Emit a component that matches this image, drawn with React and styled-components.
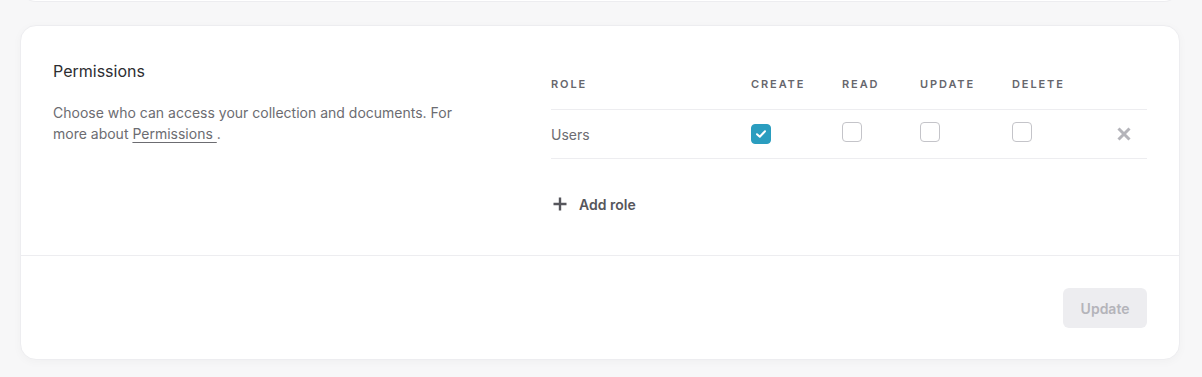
import React from 'react'
import styled, { createGlobalStyle } from 'styled-components'

const GlobalStyle = createGlobalStyle`
  html, body {
    margin: 0;
    padding: 0;
    background: #f7f7f8;
    font-family: Inter, "Noto Sans", sans-serif;
    overflow: hidden;
  }
`

const Page = styled.div`
  padding: 0 22px 16px 20px;
`

const PrevCard = styled.div`
  box-sizing: border-box;
  height: 18px;
  margin-top: -16px;
  margin-bottom: 23px;
  background: #fff;
  border: 1px solid #ededf0;
  border-top: none;
  border-radius: 0 0 16px 16px;
`

const Card = styled.section`
  background: #fff;
  border: 1px solid #ededf0;
  border-radius: 16px;
  box-shadow: 0 2px 10px rgba(0, 0, 0, 0.03);
`

const CardBody = styled.div`
  display: grid;
  grid-template-columns: 466px 1fr;
  column-gap: 32px;
  padding: 32px 32px 31px 32px;
  border-bottom: 1px solid #ededf0;
`

const Intro = styled.div`
  display: flex;
  flex-direction: column;
`

const Title = styled.h2`
  margin: 0;
  font-size: 16px;
  line-height: 26px;
  font-weight: 400;
  color: #2d2d31;
`

const Description = styled.p`
  margin: 18px 0 0 0;
  font-size: 14px;
  line-height: 21px;
  color: #6c6c71;
  max-width: 410px;
`

const Link = styled.a`
  color: #6c6c71;
  text-decoration: underline;
  text-underline-offset: 3px;
`

const Table = styled.div`
  display: flex;
  flex-direction: column;
`

const Row = styled.div`
  display: grid;
  grid-template-columns: 200px 91px 78px 92px 1fr auto;
  align-items: center;
  height: ${p => (p.$head ? '51px' : '48px')};
  border-bottom: 1px solid #ededf0;
`

const HeadCell = styled.div`
  font-size: 11px;
  font-weight: 600;
  letter-spacing: 1.9px;
  text-transform: uppercase;
  color: #66666c;
`

const RoleCell = styled.div`
  font-size: 14px;
  color: #6c6c71;
`

const Check = styled.span`
  box-sizing: border-box;
  width: 20px;
  height: 20px;
  border-radius: 4px;
  display: inline-flex;
  align-items: center;
  justify-content: center;
  border: 1px solid ${p => (p.$on ? '#2a9dbf' : '#c4c4c9')};
  background: ${p => (p.$on ? '#2a9dbf' : '#fff')};
`

const RemoveButton = styled.button`
  border: none;
  background: none;
  padding: 0;
  margin-right: 16px;
  display: flex;
  cursor: pointer;
`

const AddButton = styled.button`
  align-self: flex-start;
  display: flex;
  align-items: center;
  gap: 12px;
  height: 40px;
  margin-top: 25px;
  padding: 0 2px;
  border: none;
  background: none;
  font-family: inherit;
  font-size: 14px;
  font-weight: 600;
  color: #56565c;
  cursor: pointer;
`

const Footer = styled.div`
  display: flex;
  justify-content: flex-end;
  padding: 32px 32px 31px 32px;
`

const UpdateButton = styled.button`
  height: 40px;
  padding: 0 17.5px;
  border: none;
  border-radius: 6px;
  background: #ededf0;
  color: #b4b4ba;
  font-family: inherit;
  font-size: 14px;
  font-weight: 600;
`

const CheckBox = ({ on }) => (
  <Check $on={on}>
    {on && (
      <svg width="14" height="14" viewBox="0 0 14 14" fill="none">
        <path d="M3 7.2 L5.8 9.8 L11 4.2" stroke="#fff" strokeWidth="2" strokeLinecap="round" strokeLinejoin="round" />
      </svg>
    )}
  </Check>
)

const XIcon = () => (
  <svg width="14" height="14" viewBox="0 0 14 14" fill="none">
    <path d="M1.5 1.5 L12.5 12.5 M12.5 1.5 L1.5 12.5" stroke="#b4b4ba" strokeWidth="3" />
  </svg>
)

const PlusIcon = () => (
  <svg width="14" height="14" viewBox="0 0 14 14" fill="none">
    <path d="M7 0.5 V13.5 M0.5 7 H13.5" stroke="#56565c" strokeWidth="2.4" />
  </svg>
)

const perms = [
  { role: 'Users', create: true, read: false, update: false, del: false },
]

const App = () => (
  <>
    <GlobalStyle />
    <Page>
      <PrevCard />
      <Card>
        <CardBody>
          <Intro>
            <Title>Permissions</Title>
            <Description>
              Choose who can access your collection and documents. For more about{' '}
              <Link href="#">Permissions </Link>.
            </Description>
          </Intro>
          <Table>
            <Row $head>
              <HeadCell>Role</HeadCell>
              <HeadCell>Create</HeadCell>
              <HeadCell>Read</HeadCell>
              <HeadCell>Update</HeadCell>
              <HeadCell>Delete</HeadCell>
              <span />
            </Row>
            {perms.map(p => (
              <Row key={p.role}>
                <RoleCell>{p.role}</RoleCell>
                <div><CheckBox on={p.create} /></div>
                <div><CheckBox on={p.read} /></div>
                <div><CheckBox on={p.update} /></div>
                <div><CheckBox on={p.del} /></div>
                <RemoveButton aria-label="Remove role"><XIcon /></RemoveButton>
              </Row>
            ))}
            <AddButton>
              <PlusIcon />
              Add role
            </AddButton>
          </Table>
        </CardBody>
        <Footer>
          <UpdateButton disabled>Update</UpdateButton>
        </Footer>
      </Card>
    </Page>
  </>
)

export default App
